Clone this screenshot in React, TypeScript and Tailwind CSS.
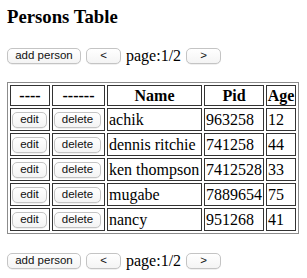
import React from 'react';

interface Person {
  name: string;
  pid: string;
  age: number;
}

const persons: Person[] = [
  { name: 'achik', pid: '963258', age: 12 },
  { name: 'dennis ritchie', pid: '741258', age: 44 },
  { name: 'ken thompson', pid: '7412528', age: 33 },
  { name: 'mugabe', pid: '7889654', age: 75 },
  { name: 'nancy', pid: '951268', age: 41 },
];

function Btn({ label, width }: { label: string; width: string }) {
  return (
    <button
      className={`${width} h-[16px] flex items-center justify-center rounded-[5px] border border-[#c4c4c4] bg-gradient-to-b from-white to-[#f4f4f4] shadow-[0_0.5px_0.5px_rgba(0,0,0,0.12)] text-[11.5px] leading-none text-[#111] [font-family:'Liberation_Sans',Arial,sans-serif]`}
    >
      {label}
    </button>
  );
}

function Pager() {
  return (
    <div className="flex items-center h-[16px]">
      <Btn label="add person" width="w-[74px]" />
      <div className="ml-[5px]">
        <Btn label="<" width="w-[35px]" />
      </div>
      <span className="ml-[5px] text-[16px] leading-[18px]">page:1/2</span>
      <div className="ml-[5px]">
        <Btn label=">" width="w-[35px]" />
      </div>
    </div>
  );
}

export default function App() {
  return (
    <div className="w-[307px] h-[278px] bg-white text-black pl-[7px] pt-[6px] [font-family:'Liberation_Serif','Times_New_Roman',serif]">
      <h3 className="text-[18.72px] font-bold leading-[22px]">Persons Table</h3>

      <div className="mt-[20px]">
        <Pager />
      </div>

      <table className="mt-[18px] w-[292px] table-fixed border-separate border-spacing-[2px] border border-[#8c8c8c] text-[16px]">
        <thead>
          <tr className="h-[21px]">
            <th className="w-[40px] border border-[#333] p-0 leading-[18px]">----</th>
            <th className="w-[53px] border border-[#333] p-0 leading-[18px]">------</th>
            <th className="w-[95px] border border-[#333] p-0 leading-[18px]">Name</th>
            <th className="w-[60px] border border-[#333] p-0 leading-[18px]">Pid</th>
            <th className="w-[30px] border border-[#333] p-0 leading-[18px]">Age</th>
          </tr>
        </thead>
        <tbody>
          {persons.map((p) => (
            <tr key={p.pid} className="h-[23px]">
              <td className="border border-[#333] p-[1px] align-middle">
                <Btn label="edit" width="w-[35px]" />
              </td>
              <td className="border border-[#333] p-[1px] align-middle">
                <Btn label="delete" width="w-[47px]" />
              </td>
              <td className="border border-[#333] p-[1px] leading-[18px] whitespace-nowrap">{p.name}</td>
              <td className="border border-[#333] p-[1px] leading-[18px]">{p.pid}</td>
              <td className="border border-[#333] p-[1px] leading-[18px]">{p.age}</td>
            </tr>
          ))}
        </tbody>
      </table>

      <div className="mt-[19px]">
        <Pager />
      </div>
    </div>
  );
}
